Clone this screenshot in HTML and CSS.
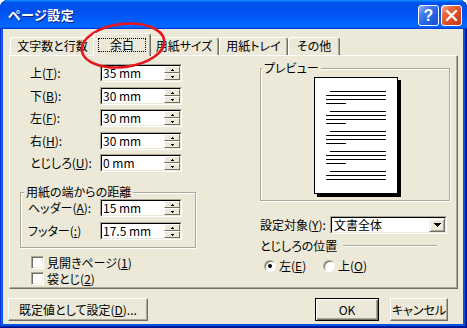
FILE: index.html
```html
<!DOCTYPE html>
<html lang="ja">
<head>
<meta charset="utf-8">
<title>ページ設定</title>
<link rel="stylesheet" href="styles.css">
</head>
<body>
<div class="window">
  <div class="titlebar">
    <span class="title">ページ設定</span>
    <div class="caption-buttons">
      <div class="cap help">?</div>
      <div class="cap close">
        <svg width="19" height="19" viewBox="0 0 19 19"><path d="M5 5 L14 14 M14 5 L5 14" stroke="#fff" stroke-width="2.4" stroke-linecap="round"/></svg>
      </div>
    </div>
  </div>
  <div class="client">
    <div class="tabs">
      <div class="tab w1">文字数と行数</div>
      <div class="tab w2 active"><span class="focus">余白</span></div>
      <div class="tab w3">用紙サイズ</div>
      <div class="tab w4">用紙トレイ</div>
      <div class="tab w5">その他</div>
    </div>
    <div class="panel">
      <div class="col-left">
        <div class="mrows">
          <div class="mrow"><span class="lbl">上(<u>T</u>):</span><div class="spin"><div class="spin-in"><span class="val">35 mm</span><div class="sbs"><div class="sb up"></div><div class="sb down"></div></div></div></div></div>
          <div class="mrow"><span class="lbl">下(<u>B</u>):</span><div class="spin"><div class="spin-in"><span class="val">30 mm</span><div class="sbs"><div class="sb up"></div><div class="sb down"></div></div></div></div></div>
          <div class="mrow"><span class="lbl">左(<u>F</u>):</span><div class="spin"><div class="spin-in"><span class="val">30 mm</span><div class="sbs"><div class="sb up"></div><div class="sb down"></div></div></div></div></div>
          <div class="mrow"><span class="lbl">右(<u>H</u>):</span><div class="spin"><div class="spin-in"><span class="val">30 mm</span><div class="sbs"><div class="sb up"></div><div class="sb down"></div></div></div></div></div>
          <div class="mrow"><span class="lbl">とじしろ(<u>U</u>):</span><div class="spin"><div class="spin-in"><span class="val">0 mm</span><div class="sbs"><div class="sb up"></div><div class="sb down"></div></div></div></div></div>
        </div>
        <fieldset class="group edge">
          <legend>用紙の端からの距離</legend>
          <div class="grows">
            <div class="grow"><span class="glbl">ヘッダー(<u>A</u>):</span><div class="spin"><div class="spin-in"><span class="val">15 mm</span><div class="sbs"><div class="sb up"></div><div class="sb down"></div></div></div></div></div>
            <div class="grow"><span class="glbl">フッター(<u>:</u>)</span><div class="spin"><div class="spin-in"><span class="val">17.5 mm</span><div class="sbs"><div class="sb up"></div><div class="sb down"></div></div></div></div></div>
          </div>
        </fieldset>
        <div class="checks">
          <div class="chk"><span class="box"></span><span>見開きページ(<u>1</u>)</span></div>
          <div class="chk"><span class="box"></span><span>袋とじ(<u>2</u>)</span></div>
        </div>
      </div>
      <div class="col-right">
        <fieldset class="group preview">
          <legend>プレビュー</legend>
          <div class="page">
            <svg width="82" height="115" viewBox="0 0 82 115" shape-rendering="crispEdges">
              <g fill="#000">
                <rect x="15" y="13" width="56" height="1"/><rect x="11" y="17" width="60" height="1"/><rect x="11" y="21" width="60" height="1"/><rect x="11" y="25" width="20" height="1"/>
                <rect x="15" y="33" width="56" height="1"/><rect x="11" y="37" width="60" height="1"/><rect x="11" y="41" width="60" height="1"/><rect x="11" y="45" width="20" height="1"/>
                <rect x="15" y="53" width="56" height="1"/><rect x="11" y="57" width="60" height="1"/><rect x="11" y="61" width="60" height="1"/><rect x="11" y="65" width="20" height="1"/>
                <rect x="15" y="73" width="56" height="1"/><rect x="11" y="77" width="60" height="1"/><rect x="11" y="81" width="60" height="1"/><rect x="11" y="85" width="20" height="1"/>
                <rect x="15" y="93" width="56" height="1"/><rect x="11" y="97" width="60" height="1"/><rect x="11" y="101" width="60" height="1"/>
              </g>
            </svg>
          </div>
        </fieldset>
        <div class="apply">
          <span class="alabel">設定対象(<u>Y</u>):</span>
          <div class="combo"><div class="combo-in"><span class="cval">文書全体</span><div class="cbtn"><svg width="7" height="4" viewBox="0 0 7 4" shape-rendering="crispEdges"><rect x="0" y="0" width="7" height="1"/><rect x="1" y="1" width="5" height="1"/><rect x="2" y="2" width="3" height="1"/><rect x="3" y="3" width="1" height="1"/></svg></div></div></div>
        </div>
        <div class="sep-head"><span>とじしろの位置</span><div class="sep-line"></div></div>
        <div class="radios">
          <div class="radio r1"><span class="dot on"></span><span>左(<u>E</u>)</span></div>
          <div class="radio"><span class="dot"></span><span>上(<u>O</u>)</span></div>
        </div>
      </div>
    </div>
    <div class="footer">
      <div class="btn wide">既定値として設定(<u>D</u>)...</div>
      <div class="btn ok default">OK</div>
      <div class="btn cancel">キャンセル</div>
    </div>
  </div>
  <svg class="annot" width="467" height="328" viewBox="0 0 467 328">
    <ellipse cx="123" cy="45.5" rx="41.5" ry="21.5" transform="rotate(-7 123 45.5)" fill="none" stroke="#E5171B" stroke-width="2.6"/>
  </svg>
</div>
</body>
</html>
```

FILE: styles.css
```css
* { box-sizing: border-box; }
html, body { margin: 0; padding: 0; }
body {
  width: 467px;
  height: 328px;
  overflow: hidden;
  background: #fff;
  font-family: "Noto Sans CJK JP", "Noto Sans", sans-serif;
  font-feature-settings: "palt";
  font-size: 12px;
  line-height: 14px;
  color: #000;
}
u { text-decoration: underline; text-underline-offset: 1px; }

.window {
  position: relative;
  width: 467px;
  height: 328px;
  display: flex;
  flex-direction: column;
  background: #0454E2;
  border-radius: 8px 8px 0 0;
  box-shadow: inset -1px -1px #00138c, inset 1px 1px #0831d9, inset -2px -2px #001ea0, inset 2px 2px #166aee;
}

.titlebar {
  height: 29px;
  flex: none;
  display: flex;
  align-items: center;
  padding: 1px 5px 0 8px;
  border-radius: 8px 8px 0 0;
  background: linear-gradient(180deg, #0997ff, #0053ee 8%, #0050ee 40%, #0066ff 88%, #0066ff 93%, #005bff 95%, #003dd7 96%, #003dd7);
}
.title {
  flex: 1;
  color: #fff;
  font-weight: bold;
  font-size: 13px;
  letter-spacing: 0.5px;
  text-shadow: 1px 1px #0a1883;
}
.caption-buttons { display: flex; gap: 2px; }
.cap {
  width: 21px;
  height: 21px;
  border: 1px solid #fff;
  border-radius: 3px;
  display: flex;
  align-items: center;
  justify-content: center;
}
.help {
  background: linear-gradient(135deg, #9cb8f4 0%, #4a7fee 28%, #2462e6 60%, #1b4fd6 100%);
  color: #fff;
  font-family: "Liberation Sans", sans-serif;
  font-weight: bold;
  font-size: 16px;
  line-height: 19px;
}
.close {
  background: linear-gradient(135deg, #f3b39c 0%, #e66a42 28%, #dc4c24 60%, #c43a14 100%);
}

.client {
  flex: 1;
  margin: 0 4px 4px 3px;
  background: #ECE9D8;
  padding: 4px 5px 3px 6px;
  display: flex;
  flex-direction: column;
}

.tabs { display: flex; height: 22px; margin-left: 1px; }
.tab {
  height: 18px;
  margin-top: 4px;
  border: 1px solid;
  border-bottom: none;
  border-color: #fff #716F64 transparent #fff;
  border-radius: 3px 3px 0 0;
  box-shadow: inset -1px 0 #ACA899;
  text-align: center;
  padding-top: 1px;
  white-space: nowrap;
}
.w1 { width: 85px; }
.w2 { width: 54px; }
.w3 { width: 70px; }
.w4 { width: 69px; }
.w5 { width: 52px; }
.tab.active {
  position: relative;
  z-index: 1;
  width: 58px;
  height: 23px;
  margin: 0 -2px;
  background: #ECE9D8;
  padding: 4px 4px 0;
}
.focus {
  display: block;
  height: 14px;
  border: 1px dotted #000;
  line-height: 12px;
  text-align: center;
}

.panel {
  height: 234px;
  width: 449px;
  border: 1px solid;
  border-color: #fff #716F64 #716F64 #fff;
  box-shadow: inset -1px -1px #ACA899;
  padding: 8px 0 0 10px;
  display: flex;
  align-items: flex-start;
  gap: 64px;
}

.col-left { width: 176px; display: flex; flex-direction: column; }
.mrows { display: flex; flex-direction: column; }
.mrow { display: flex; align-items: center; height: 18px; padding-left: 10px; }
.mrow:nth-child(2), .mrow:nth-child(4) { margin-top: 5px; }
.mrow:nth-child(3), .mrow:nth-child(5) { margin-top: 4px; }
.lbl { width: 70px; white-space: nowrap; }

.spin {
  width: 82px;
  height: 18px;
  border: 1px solid;
  border-color: #ACA899 #fff #fff #ACA899;
  background: #fff;
}
.spin-in {
  height: 100%;
  display: flex;
  border: 1px solid;
  border-color: #000 #ECE9D8 #ECE9D8 #000;
}
.val { flex: 1; padding-left: 1px; line-height: 14px; white-space: nowrap; }
.sbs { width: 16px; display: flex; flex-direction: column; }
.sb {
  height: 7px;
  background: #ECE9D8;
  border: 1px solid;
  border-color: #fff #716F64 #716F64 #fff;
  display: flex;
  align-items: center;
  justify-content: center;
}
.sb::after {
  content: "";
  width: 1px;
  height: 1px;
  background: #000;
}
.sb.up::after { margin-top: -1px; box-shadow: -1px 1px #000, 0 1px #000, 1px 1px #000; }
.sb.down::after { margin-top: 1px; box-shadow: -1px -1px #000, 0 -1px #000, 1px -1px #000; }

.group {
  margin: 0;
  padding: 0;
  min-width: 0;
  border: 1px solid #ACA899;
  box-shadow: inset 1px 1px #fff, 1px 1px #fff;
}
.group legend {
  padding: 0 2px;
  margin-left: 3px;
  line-height: 14px;
  height: 14px;
  background: #ECE9D8;
  white-space: nowrap;
}
.edge { margin-top: 13px; width: 176px; }
.grows { padding: 0 0 7px 7px; display: flex; flex-direction: column; gap: 5px; }
.grow { display: flex; align-items: center; height: 18px; }
.glbl { width: 72px; white-space: nowrap; }

.checks { margin-top: 8px; padding-left: 11px; display: flex; flex-direction: column; gap: 3px; }
.chk { display: flex; align-items: center; height: 13px; }
.box {
  width: 13px;
  height: 13px;
  background: #fff;
  border: 1px solid;
  border-color: #ACA899 #fff #fff #ACA899;
  box-shadow: inset 1px 1px #716F64, inset -1px -1px #F1EFE2;
  margin-right: 3px;
}

.col-right { width: 190px; margin-top: -3px; display: flex; flex-direction: column; }
.preview { width: 190px; }
.preview legend { margin-left: 1px; }
.page {
  width: 84px;
  height: 117px;
  margin: 2px 0 6px 53px;
  background: #fff;
  border: 1px solid #000;
  box-shadow: 3px 3px 0 #000;
}
.page svg { display: block; }

.apply { display: flex; align-items: center; height: 18px; margin-top: 15px; }
.alabel { width: 70px; white-space: nowrap; }
.combo {
  width: 117px;
  height: 18px;
  border: 1px solid;
  border-color: #ACA899 #fff #fff #ACA899;
  background: #fff;
}
.combo-in {
  height: 100%;
  display: flex;
  border: 1px solid;
  border-color: #000 #ECE9D8 #ECE9D8 #000;
}
.cval { flex: 1; padding-left: 2px; white-space: nowrap; }
.cbtn {
  width: 16px;
  background: #ECE9D8;
  border: 1px solid;
  border-color: #F1EFE2 #716F64 #716F64 #F1EFE2;
  box-shadow: inset 1px 1px #fff, inset -1px -1px #ACA899;
  display: flex;
  align-items: center;
  justify-content: center;
}
.cbtn svg { display: block; fill: #000; }

.sep-head { display: flex; align-items: center; height: 14px; margin-top: 5px; white-space: nowrap; }
.sep-line {
  flex: 1;
  height: 2px;
  margin: 0 13px 0 6px;
  border-top: 1px solid #ACA899;
  border-bottom: 1px solid #fff;
}

.radios { display: flex; margin-top: 6px; padding-left: 4px; height: 13px; align-items: center; }
.radio { display: flex; align-items: center; white-space: nowrap; }
.radio.r1 { width: 59px; }
.dot {
  width: 12px;
  height: 12px;
  border-radius: 50%;
  background: #fff;
  border: 1px solid;
  border-color: #ACA899 #fff #fff #ACA899;
  box-shadow: inset 1px 1px #716F64;
  margin-right: 3px;
  display: flex;
  align-items: center;
  justify-content: center;
}
.dot.on::after {
  content: "";
  width: 4px;
  height: 4px;
  border-radius: 50%;
  background: #000;
}

.footer { display: flex; margin-top: 9px; margin-left: -1px; padding-right: 10px; }
.btn {
  height: 23px;
  background: #ECE9D8;
  border: 1px solid;
  border-color: #fff #716F64 #716F64 #fff;
  box-shadow: inset -1px -1px #ACA899;
  display: flex;
  align-items: center;
  justify-content: center;
  white-space: nowrap;
}
.btn.wide { width: 140px; }
.btn.ok { width: 64px; margin-left: auto; }
.btn.default {
  border: 1px solid #000;
  box-shadow: inset 1px 1px #fff, inset -1px -1px #716F64, inset -2px -2px #ACA899;
}
.btn.cancel { width: 58px; margin-left: 11px; }

.annot { position: absolute; left: 0; top: 0; pointer-events: none; }
```
